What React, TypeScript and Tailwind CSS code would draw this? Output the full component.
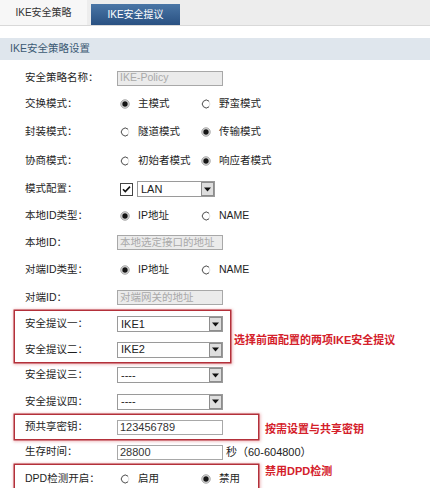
import React from 'react';

const font = "font-['Liberation_Sans','Noto_Sans_CJK_SC',sans-serif]";

const Radio = ({ on }: { on?: boolean }) =>
  on ? (
    <svg width="10" height="10" viewBox="0 0 10 10" className="shrink-0">
      <circle cx="5" cy="5" r="4.2" fill="#e2e2e2" stroke="#8a8a8a" strokeWidth="0.8" />
      <circle cx="5" cy="5" r="2.7" fill="#151515" />
    </svg>
  ) : (
    <svg width="10" height="10" viewBox="0 0 10 10" className="shrink-0">
      <circle cx="5" cy="5" r="3.9" fill="#fff" stroke="#d6d6d6" strokeWidth="0.8" />
      <path d="M8 2.2 A3.9 3.9 0 1 0 8 7.8" fill="none" stroke="#555" strokeWidth="1" />
    </svg>
  );

const RadioPair = ({ a, b, first }: { a: string; b: string; first: boolean }) => (
  <div className="flex items-center">
    <div className="flex w-[81px] items-center gap-[8px] pl-[3px]">
      <Radio on={first} />
      <span>{a}</span>
    </div>
    <div className="flex items-center gap-[8px] pl-[3px]">
      <Radio on={!first} />
      <span>{b}</span>
    </div>
  </div>
);

const TextBox = ({ value, disabled }: { value: string; disabled?: boolean }) => (
  <div
    className={
      disabled
        ? 'flex h-[15px] w-[106px] items-center border border-[#a8a8a8] bg-[#ebebeb] pl-[2px] text-[10.5px] text-[#a9a9a9]'
        : 'flex h-[15px] w-[106px] items-center border border-[#a8a8a8] bg-white pl-[2px] text-[11px] text-[#333]'
    }
  >
    {value}
  </div>
);

const Select = ({ value, w }: { value: string; w: string }) => (
  <div className={`flex h-[16px] items-center justify-between border border-[#9a9a9a] bg-white ${w}`}>
    <span className="pl-[3px] text-[11px] text-[#222]">{value}</span>
    <div className="flex h-[14px] w-[13px] items-center justify-center border border-[#8d8d8d] bg-[#dedede]">
      <svg width="7" height="5" viewBox="0 0 7 5">
        <path d="M0 0.5 H7 L3.5 4.5 Z" fill="#111" />
      </svg>
    </div>
  </div>
);

const Checkbox = () => (
  <svg width="13" height="13" viewBox="0 0 13 13" className="shrink-0">
    <rect x="0.5" y="0.5" width="12" height="12" fill="#fff" stroke="#444" />
    <path d="M3 6.2 L5.3 8.6 L10 3.6" fill="none" stroke="#111" strokeWidth="1.6" />
  </svg>
);

const Row = ({ h, label, inBox, children }: { h: string; label: string; inBox?: boolean; children: React.ReactNode }) => (
  <div className={`flex items-center ${h} ${inBox ? 'pl-[10px]' : 'pl-[25px]'}`}>
    <div className="w-[92px] shrink-0 text-[10.5px] text-[#1e1e1e]">{label}</div>
    <div className="text-[10.5px] text-[#1e1e1e]">{children}</div>
  </div>
);

const Note = ({ children, cls }: { children: React.ReactNode; cls: string }) => (
  <div className={`text-[11px] font-bold text-[#d4202a] ${cls}`}>{children}</div>
);

const redBox = 'shadow-[0_0_0_1.5px_#b3303a,0_0_3px_2.5px_rgba(215,90,100,0.45)]';

export default function App() {
  return (
    <div className={`h-[488px] w-[430px] overflow-hidden bg-white ${font}`}>
      {/* tabs */}
      <div className="flex h-[26px] border-b border-[#d9d9d9] bg-[#ededed]">
        <div className="flex h-full w-[87px] items-center justify-center bg-[#f7f7f7] text-[10px] text-[#333]">
          IKE安全策略
        </div>
        <div className="ml-[4px] mt-[4px] flex h-[21px] w-[89px] items-center justify-center bg-gradient-to-b from-[#4a76a6] to-[#2a5182] text-[10px] text-white">
          IKE安全提议
        </div>
      </div>

      <div className="mt-[12px] flex h-[22px] items-center bg-[#dfe6ed] pl-[10px] text-[10.5px] text-[#3c5a74]">
        IKE安全策略设置
      </div>

      <div className="mt-[6px]">
        <Row h="h-[24px]" label="安全策略名称：">
          <TextBox value="IKE-Policy" disabled />
        </Row>
        <Row h="h-[27px]" label="交换模式：">
          <RadioPair a="主模式" b="野蛮模式" first />
        </Row>
        <Row h="h-[30px]" label="封装模式：">
          <RadioPair a="隧道模式" b="传输模式" first={false} />
        </Row>
        <Row h="h-[28px]" label="协商模式：">
          <RadioPair a="初始者模式" b="响应者模式" first={false} />
        </Row>
        <Row h="h-[28px]" label="模式配置：">
          <div className="flex items-center gap-[4px] pl-[3px]">
            <Checkbox />
            <Select value="LAN" w="w-[78px]" />
          </div>
        </Row>
        <Row h="h-[26px]" label="本地ID类型：">
          <RadioPair a="IP地址" b="NAME" first />
        </Row>
        <Row h="h-[27px]" label="本地ID：">
          <TextBox value="本地选定接口的地址" disabled />
        </Row>
        <Row h="h-[28px]" label="对端ID类型：">
          <RadioPair a="IP地址" b="NAME" first />
        </Row>
        <Row h="h-[27px]" label="对端ID：">
          <TextBox value="对端网关的地址" disabled />
        </Row>

        <div className="flex items-center">
          <div className={`ml-[15px] w-[215px] ${redBox}`}>
            <Row h="h-[26px]" label="安全提议一：" inBox>
              <Select value="IKE1" w="w-[106px]" />
            </Row>
            <Row h="h-[25px]" label="安全提议二：" inBox>
              <Select value="IKE2" w="w-[106px]" />
            </Row>
          </div>
          <Note cls="ml-[4px] mt-[8px]">选择前面配置的两项IKE安全提议</Note>
        </div>

        <Row h="h-[26px]" label="安全提议三：">
          <Select value="----" w="w-[106px]" />
        </Row>
        <Row h="h-[27px]" label="安全提议四：">
          <Select value="----" w="w-[106px]" />
        </Row>

        <div className="flex items-center">
          <div className={`ml-[15px] w-[243px] ${redBox}`}>
            <Row h="h-[24px]" label="预共享密钥：" inBox>
              <TextBox value="123456789" />
            </Row>
          </div>
          <Note cls="ml-[7px] mt-[4px]">按需设置与共享密钥</Note>
        </div>

        <Row h="h-[26px]" label="生存时间：">
          <div className="flex items-center">
            <TextBox value="28800" />
            <span className="ml-[3px] text-[11px] text-[#222]">秒（60-604800）</span>
          </div>
        </Row>

        <div className="flex items-start">
          <div className={`ml-[15px] w-[243px] ${redBox}`}>
            <Row h="h-[28px]" label="DPD检测开启：" inBox>
              <RadioPair a="启用" b="禁用" first={false} />
            </Row>
          </div>
          <Note cls="ml-[7px] mt-[-2px]">禁用DPD检测</Note>
        </div>
      </div>
    </div>
  );
}
